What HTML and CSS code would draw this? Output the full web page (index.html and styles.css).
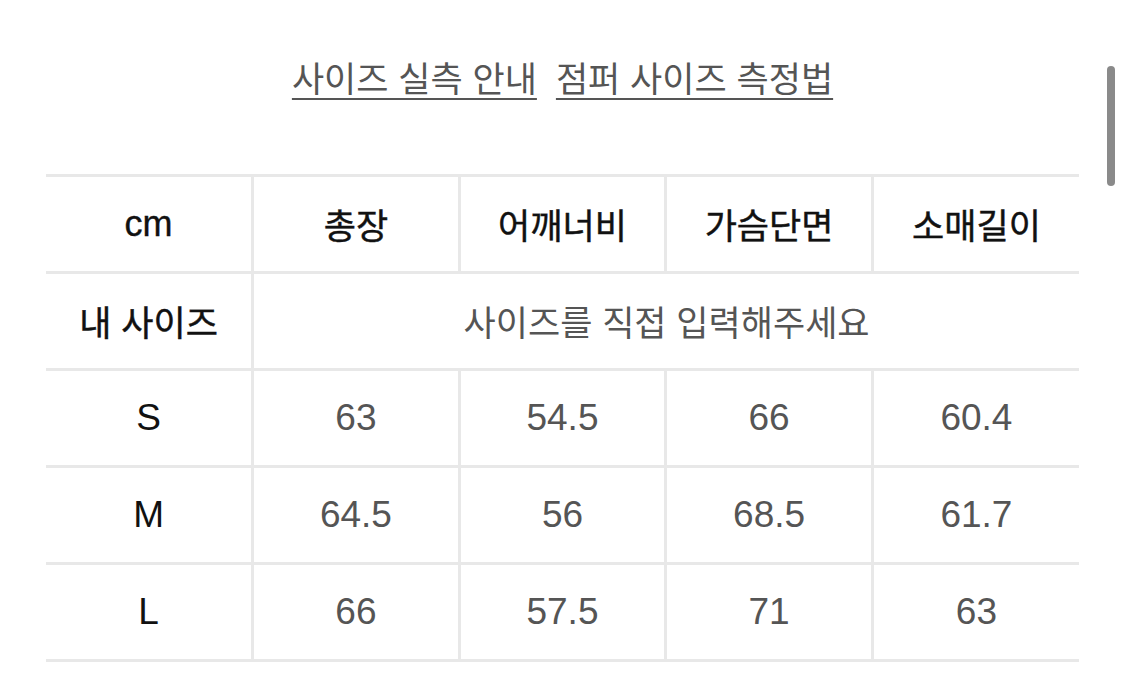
FILE: index.html
```html
<!DOCTYPE html>
<html lang="ko">
<head>
<meta charset="utf-8">
<title>사이즈 실측</title>
<link rel="stylesheet" href="styles.css">
</head>
<body>
<div class="page">
  <div class="links">
    <a class="link" href="#">사이즈 실측 안내</a>
    <a class="link" href="#">점퍼 사이즈 측정법</a>
  </div>
  <table class="size-table">
    <thead>
      <tr>
        <th class="unit">cm</th>
        <th class="ko">총장</th>
        <th class="ko">어깨너비</th>
        <th class="ko">가슴단면</th>
        <th class="ko">소매길이</th>
      </tr>
    </thead>
    <tbody>
      <tr>
        <th class="ko">내 사이즈</th>
        <td class="ko" colspan="4">사이즈를 직접 입력해주세요</td>
      </tr>
      <tr>
        <th>S</th><td>63</td><td>54.5</td><td>66</td><td>60.4</td>
      </tr>
      <tr>
        <th>M</th><td>64.5</td><td>56</td><td>68.5</td><td>61.7</td>
      </tr>
      <tr>
        <th>L</th><td>66</td><td>57.5</td><td>71</td><td>63</td>
      </tr>
    </tbody>
  </table>
</div>
<div class="scrollbar"></div>
</body>
</html>
```

FILE: styles.css
```css
html, body {
  margin: 0;
  padding: 0;
  background: #ffffff;
}
body {
  font-family: "Liberation Sans", "Noto Sans CJK KR", sans-serif;
  color: #111;
  overflow: hidden;
}
.page {
  padding: 52px 46px 0 46px;
}
.links {
  display: flex;
  justify-content: center;
  gap: 19px;
  height: 122px;
}
.link {
  font-family: "Noto Sans CJK KR", sans-serif;
  font-size: 35px;
  color: #555;
  text-decoration: underline;
  text-decoration-thickness: 2px;
  text-underline-offset: 6px;
  line-height: 50px;
  height: 50px;
}
.size-table {
  width: 1033px;
  border-collapse: collapse;
  table-layout: fixed;
}
.size-table tr {
  height: 97px;
}
.size-table th,
.size-table td {
  border: 3px solid #e8e8e8;
  text-align: center;
  vertical-align: middle;
  padding: 0;
  font-size: 37px;
  line-height: 1.1;
}
.size-table tr > :first-child {
  border-left: none;
}
.size-table tr > :last-child {
  border-right: none;
}
.size-table th {
  font-weight: 400;
  color: #111;
}
.size-table th.unit {
  font-size: 36px;
  -webkit-text-stroke: 0.4px #111;
}
.size-table .ko {
  font-family: "Noto Sans CJK KR", sans-serif;
  font-size: 35px;
}
.size-table th.ko {
  font-weight: 400;
  -webkit-text-stroke: 0.45px #111;
}
.size-table td {
  color: #555;
  font-weight: 400;
}
.scrollbar {
  position: absolute;
  left: 1107px;
  top: 66px;
  width: 8px;
  height: 120px;
  border-radius: 4px;
  background: #8a8a8a;
}
```
